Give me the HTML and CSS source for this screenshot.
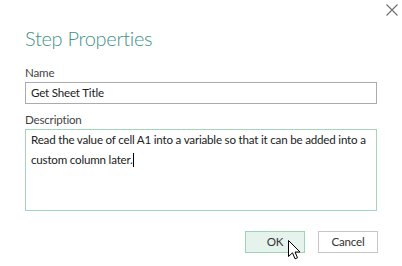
FILE: index.html
```html
<!DOCTYPE html>
<html>
<head>
<meta charset="utf-8">
<link rel="stylesheet" href="styles.css">
</head>
<body>
<div class="dialog">
  <div class="topbar">
    <svg class="close" width="12" height="12" viewBox="0 0 12 12"><path d="M0.5 0.5 L11.5 11.5 M11.5 0.5 L0.5 11.5" stroke="#6e6e6e" stroke-width="1.1" fill="none"/></svg>
  </div>
  <div class="title">Step Properties</div>
  <div class="label label-name">Name</div>
  <div class="input">Get Sheet Title</div>
  <div class="label label-desc">Description</div>
  <div class="textarea">Read the value of cell A1 into a variable so that it can be added into a custom column later.<span class="caret"></span></div>
  <div class="buttons">
    <div class="btn btn-ok">OK</div>
    <div class="btn btn-cancel">Cancel</div>
  </div>
  <svg class="pointer" width="13" height="20" viewBox="0 0 13 20"><path d="M0.5 0.5 L0.5 16.5 L4.5 12.8 L7 18.8 L9.5 17.8 L7 12 L12 12 Z" fill="#fff" stroke="#000" stroke-width="1" stroke-linejoin="miter"/></svg>
</div>
</body>
</html>
```
FILE: styles.css
```css
html, body {
  margin: 0;
  padding: 0;
  background: #fff;
}
.dialog {
  position: relative;
  width: 402px;
  height: 266px;
  box-sizing: border-box;
  padding: 4px 25px 0 25px;
  display: flex;
  flex-direction: column;
  font-family: "Segoe UI", Lato, "Noto Sans", sans-serif;
  font-size: 11.6px;
  letter-spacing: -0.2px;
  color: #333;
  overflow: hidden;
}
.topbar {
  display: flex;
  justify-content: flex-end;
  margin-right: -21px;
  height: 12px;
}
.close {
  display: block;
}
.title {
  margin-top: 8px;
  font-size: 20px;
  line-height: 28px;
  font-weight: 300;
  letter-spacing: -0.3px;
  color: #3f9187;
}
.label {
  line-height: 16px;
  color: #444;
}
.label-name {
  margin-top: 13px;
}
.label-desc {
  margin-top: 8px;
}
.input {
  margin-top: 1px;
  height: 22px;
  box-sizing: border-box;
  border: 1px solid #ababab;
  padding: 0 5px;
  line-height: 20px;
  color: #222;
}
.textarea {
  margin-top: 1px;
  height: 82px;
  box-sizing: border-box;
  border: 1px solid #a3d5ba;
  padding: 0 5px;
  line-height: 19.5px;
  color: #222;
}
.caret {
  display: inline-block;
  width: 1px;
  height: 14px;
  background: #000;
  vertical-align: -3px;
}
.buttons {
  margin-top: 20px;
  margin-right: -1px;
  display: flex;
  justify-content: flex-end;
  gap: 13px;
}
.btn {
  width: 60px;
  height: 22px;
  box-sizing: border-box;
  text-align: center;
  line-height: 20px;
  color: #333;
}
.btn-ok {
  background: #e6f3ec;
  border: 1px solid #9fd3b6;
}
.btn-cancel {
  background: #fff;
  border: 1px solid #c6c6c6;
}
.pointer {
  position: absolute;
  left: 288px;
  top: 240px;
}
```
